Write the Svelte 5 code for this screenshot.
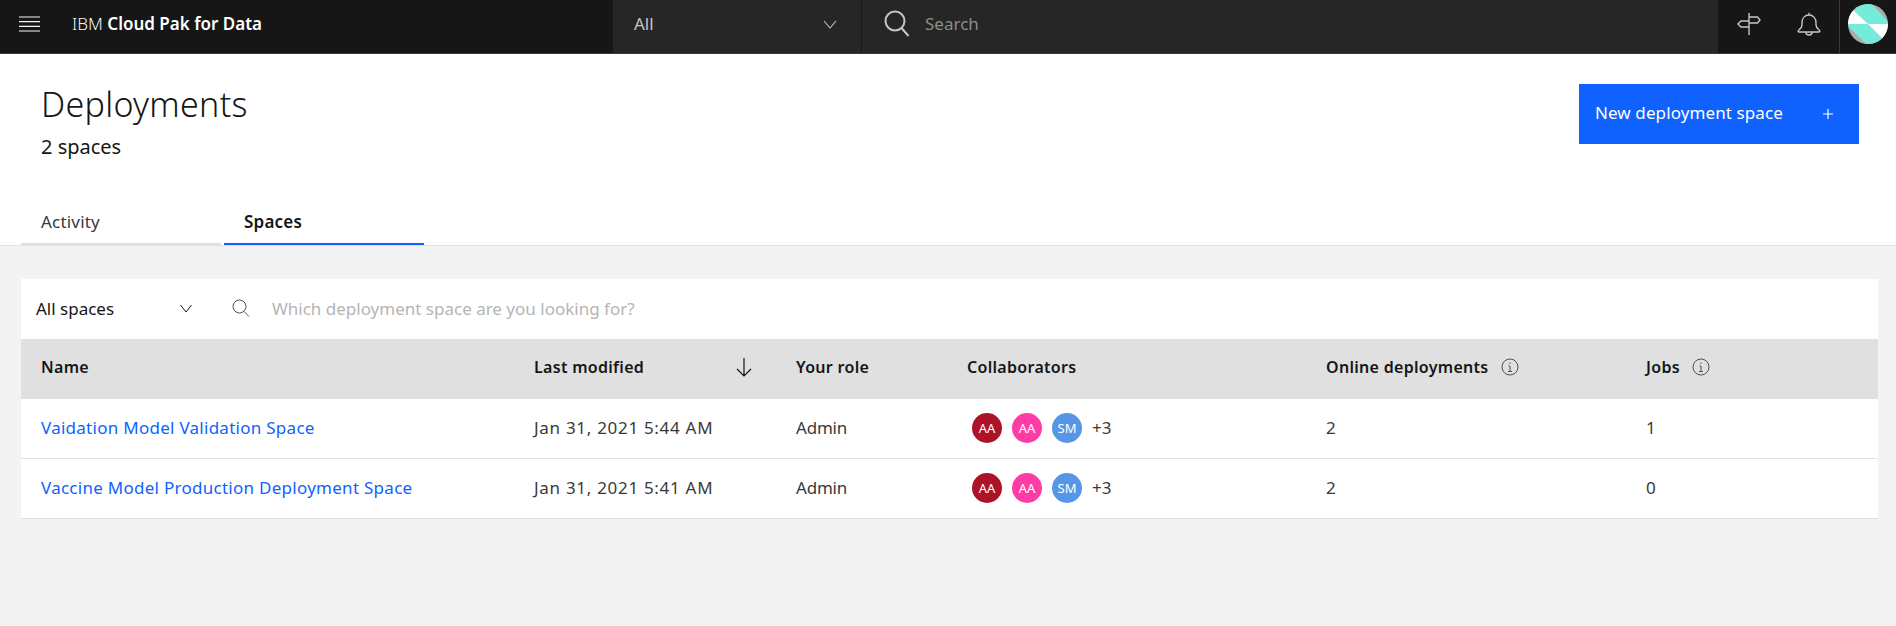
<script>
  const rows = [
    { name: 'Vaidation Model Validation Space', modified: 'Jan 31, 2021 5:44 AM', online: 2, jobs: 1 },
    { name: 'Vaccine Model Production Deployment Space', modified: 'Jan 31, 2021 5:41 AM', online: 2, jobs: 0 },
  ];
  const people = [
    { initials: 'AA', color: '#ad1328' },
    { initials: 'AA', color: '#ff3ca6' },
    { initials: 'SM', color: '#5596e6' },
  ];
</script>

<div class="page">
  <header class="topbar">
    <div class="brand">
      <svg class="menu" width="21" height="16" viewBox="0 0 21 16" fill="none" stroke="#f4f4f4" stroke-width="1.2">
        <path d="M0 1h21M0 5.700h21M0 10.300h21M0 15h21" />
      </svg>
      <span class="product"><span class="ibm">IBM</span> <b>Cloud Pak for Data</b></span>
    </div>
    <div class="scope">
      <span class="bar-text">All</span>
      <svg width="14" height="14" viewBox="0 0 14 14" fill="none" stroke="#c6c6c6" stroke-width="1.1">
        <path d="M1 4l6 7 6-7" />
      </svg>
    </div>
    <div class="global-search">
      <svg width="28" height="28" viewBox="0 0 28 28" fill="none" stroke="#c6c6c6" stroke-width="2">
        <circle cx="12" cy="11" r="9.500" />
        <path d="M18.500 18l7 8" />
      </svg>
      <span class="bar-text">Search</span>
    </div>
    <div class="actions">
      <button class="action" aria-label="Guide">
        <svg width="24" height="24" viewBox="0 0 24 24" fill="none" stroke="#c6c6c6" stroke-width="1.4">
          <path d="M12 1v22M12 5h8.500l2.500 3-2.500 3H12M12 9H4l-3 3 3 3h8" />
        </svg>
      </button>
      <button class="action" aria-label="Notifications">
        <svg width="24" height="24" viewBox="0 0 24 24" fill="none" stroke="#c6c6c6" stroke-width="1.4">
          <path d="M12 3c-4 0-7 3-7 8v2c0 2.500-2 4-3.500 5.500-.6.800-.2 1.500.8 1.500h19.400c1 0 1.400-.7.800-1.500C21 17 19 15.500 19 13v-2c0-5-3-8-7-8zM12 .8V3M8.800 20c0 4 6.400 4 6.400 0" />
        </svg>
      </button>
      <div class="account">
        <svg width="40" height="40" viewBox="0 0 40 40">
          <defs><clipPath id="round"><circle cx="20" cy="20" r="20" /></clipPath></defs>
          <g clip-path="url(#round)">
            <rect width="40" height="40" fill="#ababab" />
            <path d="M4 5L20 20H42L22 -2H4z" fill="#74ecd9" />
            <path d="M-2 20H20L36 36V42H20z" fill="#74ecd9" />
            <path d="M4 5L20 20H-2V5zM20 20H42V38H38z" fill="#fff" />
          </g>
        </svg>
      </div>
    </div>
  </header>

  <section class="heading">
    <div>
      <h1>Deployments</h1>
      <p>2 spaces</p>
    </div>
    <button class="primary">
      <span>New deployment space</span>
      <svg width="16" height="16" viewBox="0 0 16 16" fill="none" stroke="#fff" stroke-width="1.2">
        <path d="M8 3v10M3 8h10" />
      </svg>
    </button>
  </section>

  <nav class="tabs">
    <a class="tab" href="#activity">Activity</a>
    <a class="tab active" href="#spaces">Spaces</a>
  </nav>

  <main class="content">
    <div class="card">
      <div class="filters">
        <div class="filter-select">
          <span>All spaces</span>
          <svg width="14" height="14" viewBox="0 0 14 14" fill="none" stroke="#161616" stroke-width="1">
            <path d="M1.500 4l5.500 7 5.500-7" />
          </svg>
        </div>
        <div class="filter-search">
          <svg width="18" height="18" viewBox="0 0 18 18" fill="none" stroke="#525252" stroke-width="1">
            <circle cx="7.500" cy="7.500" r="6.500" />
            <path d="M12 12.500l5 5" />
          </svg>
          <span>Which deployment space are you looking for?</span>
        </div>
      </div>

      <div class="row head">
        <div class="cell">Name</div>
        <div class="cell sorted">
          Last modified
          <svg width="18" height="20" viewBox="0 0 18 20" fill="none" stroke="#161616" stroke-width="1.2">
            <path d="M9 1v18M2 12l7 7 7-7" />
          </svg>
        </div>
        <div class="cell">Your role</div>
        <div class="cell">Collaborators</div>
        <div class="cell">
          Online deployments
          {@render info()}
        </div>
        <div class="cell">
          Jobs
          {@render info()}
        </div>
      </div>

      {#each rows as row}
        <div class="row">
          <div class="cell"><a href="#space">{row.name}</a></div>
          <div class="cell date">{row.modified}</div>
          <div class="cell role">Admin</div>
          <div class="cell people">
            {#each people as person}
              <span class="avatar" style="background: {person.color}">{person.initials}</span>
            {/each}
            <span>+3</span>
          </div>
          <div class="cell">{row.online}</div>
          <div class="cell">{row.jobs}</div>
        </div>
      {/each}
    </div>
  </main>
</div>

{#snippet info()}
  <svg class="info" width="18" height="18" viewBox="0 0 18 18" fill="none" stroke="#525252" stroke-width="1">
    <circle cx="9" cy="9" r="8" />
    <path d="M7 13.500h4M9 13.500V8H7.500M9 4.500v1.500" />
  </svg>
{/snippet}

<style>
  :global(body) {
    margin: 0;
    background: #f3f3f3;
    font-family: "Noto Sans", Roboto, sans-serif;
  }

  .page {
    min-height: 626px;
    color: #161616;
  }

  .topbar {
    height: 48px;
    padding-bottom: 5px;
    display: flex;
    background: #161616;
    border-bottom: 1px solid #393939;
  }

  .topbar > * {
    height: 53px;
    margin-bottom: -5px;
    padding-bottom: 5px;
    box-sizing: border-box;
  }

  .bar-text {
    margin-bottom: 2px;
  }

  .brand {
    width: 613px;
    display: flex;
    align-items: center;
    gap: 32px;
    padding-left: 19px;
  }

  .product {
    margin-bottom: 2px;
    color: #f4f4f4;
    font-size: 17px;
  }

  .ibm {
    font-weight: 300;
  }

  .product b {
    font-weight: 600;
    color: #fff;
  }

  .scope {
    width: 249px;
    display: flex;
    align-items: center;
    justify-content: space-between;
    padding: 0 24px 5px 21px;
    background: #262626;
    border-right: 1px solid #161616;
    color: #c6c6c6;
    font-size: 17px;
  }

  .global-search {
    flex: 1;
    display: flex;
    align-items: center;
    gap: 14px;
    padding-left: 21px;
    background: #262626;
    color: #8d8d8d;
    font-size: 17px;
  }

  .actions {
    width: 178px;
    display: flex;
    align-items: center;
  }

  .action {
    width: 60px;
    padding: 0 0 0 2px;
    border: 0;
    background: none;
    display: flex;
    align-items: center;
    justify-content: center;
  }

  .account {
    height: 53px;
    margin: 5px 0 0 1px;
    padding-bottom: 5px;
    box-sizing: border-box;
    flex: 1;
    display: flex;
    align-items: center;
    justify-content: center;
    border-left: 1px solid #393939;
  }

  .heading {
    height: 160px;
    padding: 28px 37px 0 41px;
    box-sizing: border-box;
    display: flex;
    justify-content: space-between;
    align-items: flex-start;
    background: #fff;
  }

  .primary {
    width: 280px;
    height: 60px;
    margin-top: 2px;
    padding: 0 23px 0 16px;
    border: 0;
    display: flex;
    align-items: center;
    justify-content: space-between;
    background: #0f62fe;
    color: #fff;
    font: inherit;
    font-size: 17px;
    letter-spacing: 0.1px;
  }

  .primary span {
    margin-bottom: 3px;
  }

  h1 {
    margin: 0;
    font-size: 34px;
    font-weight: 300;
    line-height: 44px;
    letter-spacing: 0.3px;
  }

  .heading p {
    margin: 7px 0 0;
    font-size: 20px;
    font-weight: 400;
    line-height: 28px;
  }

  .tabs {
    height: 31px;
    padding: 0 0 0 21px;
    display: flex;
    gap: 3px;
    align-items: stretch;
    background: #fff;
    border-bottom: 1px solid #e0e0e0;
  }

  .tab {
    width: 200px;
    height: 31px;
    padding-left: 20px;
    box-sizing: border-box;
    border-bottom: 2px solid #e0e0e0;
    color: #393939;
    font-size: 17px;
    line-height: 15px;
    letter-spacing: 0.2px;
    text-decoration: none;
  }

  .tab.active {
    border-bottom-color: #0f62fe;
    color: #161616;
    font-weight: 600;
  }

  .content {
    padding: 33px 18px 0 21px;
  }

  .card {
    background: #fff;
  }

  .filters {
    height: 60px;
    padding-bottom: 2px;
    box-sizing: border-box;
    display: flex;
    align-items: center;
    font-size: 17px;
  }

  .filter-select {
    width: 157px;
    margin-left: 15px;
    display: flex;
    align-items: center;
    justify-content: space-between;
  }

  .filter-search {
    margin-left: 39px;
    display: flex;
    align-items: center;
    gap: 22px;
    color: #b5b5b5;
    font-size: 17px;
  }

  .row {
    display: grid;
    grid-template-columns: 493px 262px 171px 359px 320px 252px;
    height: 60px;
    padding-bottom: 2px;
    align-items: center;
    border-bottom: 1px solid #e0e0e0;
    box-sizing: border-box;
    color: #393939;
    font-size: 17px;
  }

  .row.head {
    padding-bottom: 4px;
    background: #e0e0e0;
    color: #161616;
    font-weight: 600;
    font-size: 16px;
    letter-spacing: 0.3px;
  }

  .cell {
    padding-left: 20px;
    display: flex;
    align-items: center;
  }

  .cell a {
    color: #0f62fe;
    letter-spacing: 0.27px;
    text-decoration: none;
  }

  .date {
    letter-spacing: 0.7px;
  }

  .role {
    letter-spacing: -0.2px;
  }

  .sorted {
    justify-content: space-between;
    padding-right: 23px;
  }

  .info {
    margin-left: 12px;
  }

  .people {
    gap: 10px;
    padding-left: 25px;
  }

  .avatar {
    width: 30px;
    height: 30px;
    border-radius: 50%;
    display: flex;
    align-items: center;
    justify-content: center;
    color: #fff;
    font-size: 13px;
  }
</style>
